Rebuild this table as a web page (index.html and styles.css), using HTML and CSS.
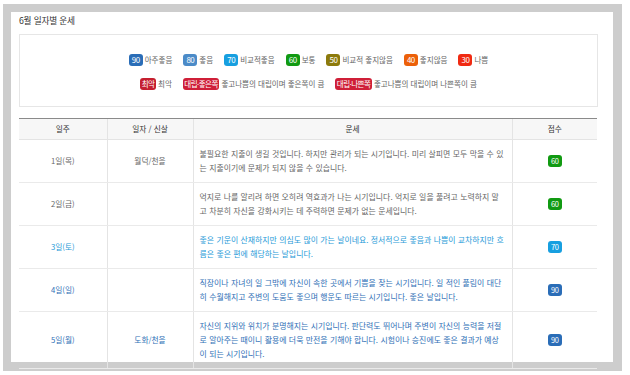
FILE: index.html
```html
<!DOCTYPE html>
<html lang="ko">
<head>
<meta charset="utf-8">
<title>6월 일자별 운세</title>
<link rel="stylesheet" href="styles.css">
</head>
<body>
<div class="frame">
  <div class="panel">
    <h2 class="title">6월 일자별 운세</h2>
    <div class="legend">
      <div class="legend-row">
        <span class="item"><span class="badge s90">90</span>아주좋음</span>
        <span class="item"><span class="badge s80">80</span>좋음</span>
        <span class="item"><span class="badge s70">70</span>비교적좋음</span>
        <span class="item"><span class="badge s60">60</span>보통</span>
        <span class="item"><span class="badge s50">50</span>비교적 좋지않음</span>
        <span class="item"><span class="badge s40">40</span>좋지않음</span>
        <span class="item"><span class="badge s30">30</span>나쁨</span>
      </div>
      <div class="legend-row">
        <span class="item"><span class="badge worst">최악</span>최악</span>
        <span class="item"><span class="badge conflict">대립·좋은쪽</span>좋고나쁨의 대립이며 좋은쪽이 큼</span>
        <span class="item"><span class="badge conflict">대립·나쁜쪽</span>좋고나쁨의 대립이며 나쁜쪽이 큼</span>
      </div>
    </div>
    <table class="fortune">
      <colgroup>
        <col class="c1"><col class="c2"><col class="c3"><col class="c4">
      </colgroup>
      <thead>
        <tr><th>일주</th><th>일자 / 신살</th><th>운세</th><th>점수</th></tr>
      </thead>
      <tbody>
        <tr class="t-gray">
          <td>1일(목)</td><td>월덕/천을</td>
          <td class="desc">불필요한 지출이 생길 것입니다. 하지만 관리가 되는 시기입니다. 미리 살피면 모두 막을 수 있는 지출이기에 문제가 되지 않을 수 있습니다.</td>
          <td><span class="badge s60">60</span></td>
        </tr>
        <tr class="t-gray">
          <td>2일(금)</td><td></td>
          <td class="desc">억지로 나를 알리려 하면 오히려 역효과가 나는 시기입니다. 억지로 일을 풀려고 노력하지 말고 차분히 자신을 강화시키는 데 주력하면 문제가 없는 운세입니다.</td>
          <td><span class="badge s60">60</span></td>
        </tr>
        <tr class="t-sky">
          <td>3일(토)</td><td></td>
          <td class="desc">좋은 기운이 산재하지만 의심도 많이 가는 날이네요. 정서적으로 좋음과 나쁨이 교차하지만 흐름은 좋은 편에 해당하는 날입니다.</td>
          <td><span class="badge s70">70</span></td>
        </tr>
        <tr class="t-blue">
          <td>4일(일)</td><td></td>
          <td class="desc">직장이나 자녀의 일 그밖에 자신이 속한 곳에서 기쁨을 찾는 시기입니다. 일 적인 풀림이 대단히 수월해지고 주변의 도움도 좋으며 행운도 따르는 시기입니다. 좋은 날입니다.</td>
          <td><span class="badge s90">90</span></td>
        </tr>
        <tr class="t-blue">
          <td>5일(월)</td><td>도화/천을</td>
          <td class="desc">자신의 지위와 위치가 분명해지는 시기입니다. 판단력도 뛰어나며 주변이 자신의 능력을 저절로 알아주는 때이니 활용에 더욱 만전을 기해야 합니다. 시험이나 승진에도 좋은 결과가 예상이 되는 시기입니다.</td>
          <td><span class="badge s90">90</span></td>
        </tr>
      </tbody>
    </table>
  </div>
</div>
</body>
</html>
```
FILE: styles.css
```css
* { box-sizing: border-box; }
html, body {
  margin: 0;
  background: #ffffff;
  font-family: "Noto Sans CJK KR", "Noto Sans", sans-serif;
  color: #555;
}
body { padding: 4px 0 0 3px; }

.frame {
  width: 619px;
  height: 367px;
  background: #cdcdcd;
  padding: 8px;
}
.panel {
  width: 602px;
  height: 350px;
  background: #fff;
  padding: 0 15px 0 8px;
}
.title {
  margin: 0;
  padding-top: 2px;
  height: 22px;
  font-size: 8.7px;
  font-weight: normal;
  line-height: 14px;
  color: #333;
  letter-spacing: -0.2px;
}
.legend {
  border: 1px solid #e6e6e6;
  height: 73px;
  display: flex;
  flex-direction: column;
  align-items: center;
  padding-top: 19px;
  gap: 12px;
}
.legend-row {
  display: flex;
  gap: 11px;
  align-items: center;
  font-size: 7.5px;
  color: #666;
  line-height: 12px;
}
.item {
  display: flex;
  align-items: center;
  gap: 2px;
}
.badge {
  display: inline-block;
  color: #fff;
  font-size: 8px;
  line-height: 12px;
  height: 12px;
  padding: 0 1.5px;
  border-radius: 3px;
  letter-spacing: -0.5px;
  min-width: 14px;
  text-align: center;
}
.s90 { background: #2a6db7; }
.s80 { background: #4b8bc8; }
.s70 { background: #179fe0; }
.s60 { background: #119a12; }
.s50 { background: #8c7a0c; }
.s40 { background: #ec6009; }
.s30 { background: #f02a12; }
.worst { background: #c51f2f; font-size: 7.5px; }
.conflict { background: #cf1f38; font-size: 7.5px; }

.fortune {
  margin-top: 11px;
  width: 578px;
  border-collapse: collapse;
  table-layout: fixed;
  font-size: 7.7px;
  line-height: 14px;
}
.c1 { width: 88px; }
.c2 { width: 86px; }
.c3 { width: 319px; }
.c4 { width: 85px; }
.fortune th {
  background: #f7f7f7;
  border-top: 1px solid #8a8a8a;
  border-bottom: 1px solid #e4e4e4;
  border-left: 1px solid #e4e4e4;
  height: 21px;
  font-weight: normal;
  color: #333;
  padding: 0;
  text-align: center;
  font-size: 7.7px;
}
.fortune td {
  border-bottom: 1px solid #eaeaea;
  border-left: 1px solid #e4e4e4;
  text-align: center;
  padding: 7px 6px;
  vertical-align: middle;
}
.fortune th:first-child, .fortune td:first-child { border-left: none; }
.fortune td.desc { text-align: left; font-size: 7.9px; word-spacing: 0.17px; }
.fortune td .badge { font-size: 7.5px; }

.t-gray td { color: #666; }
.t-sky td { color: #1f9ad8; }
.t-blue td { color: #2f6fb6; }
```
